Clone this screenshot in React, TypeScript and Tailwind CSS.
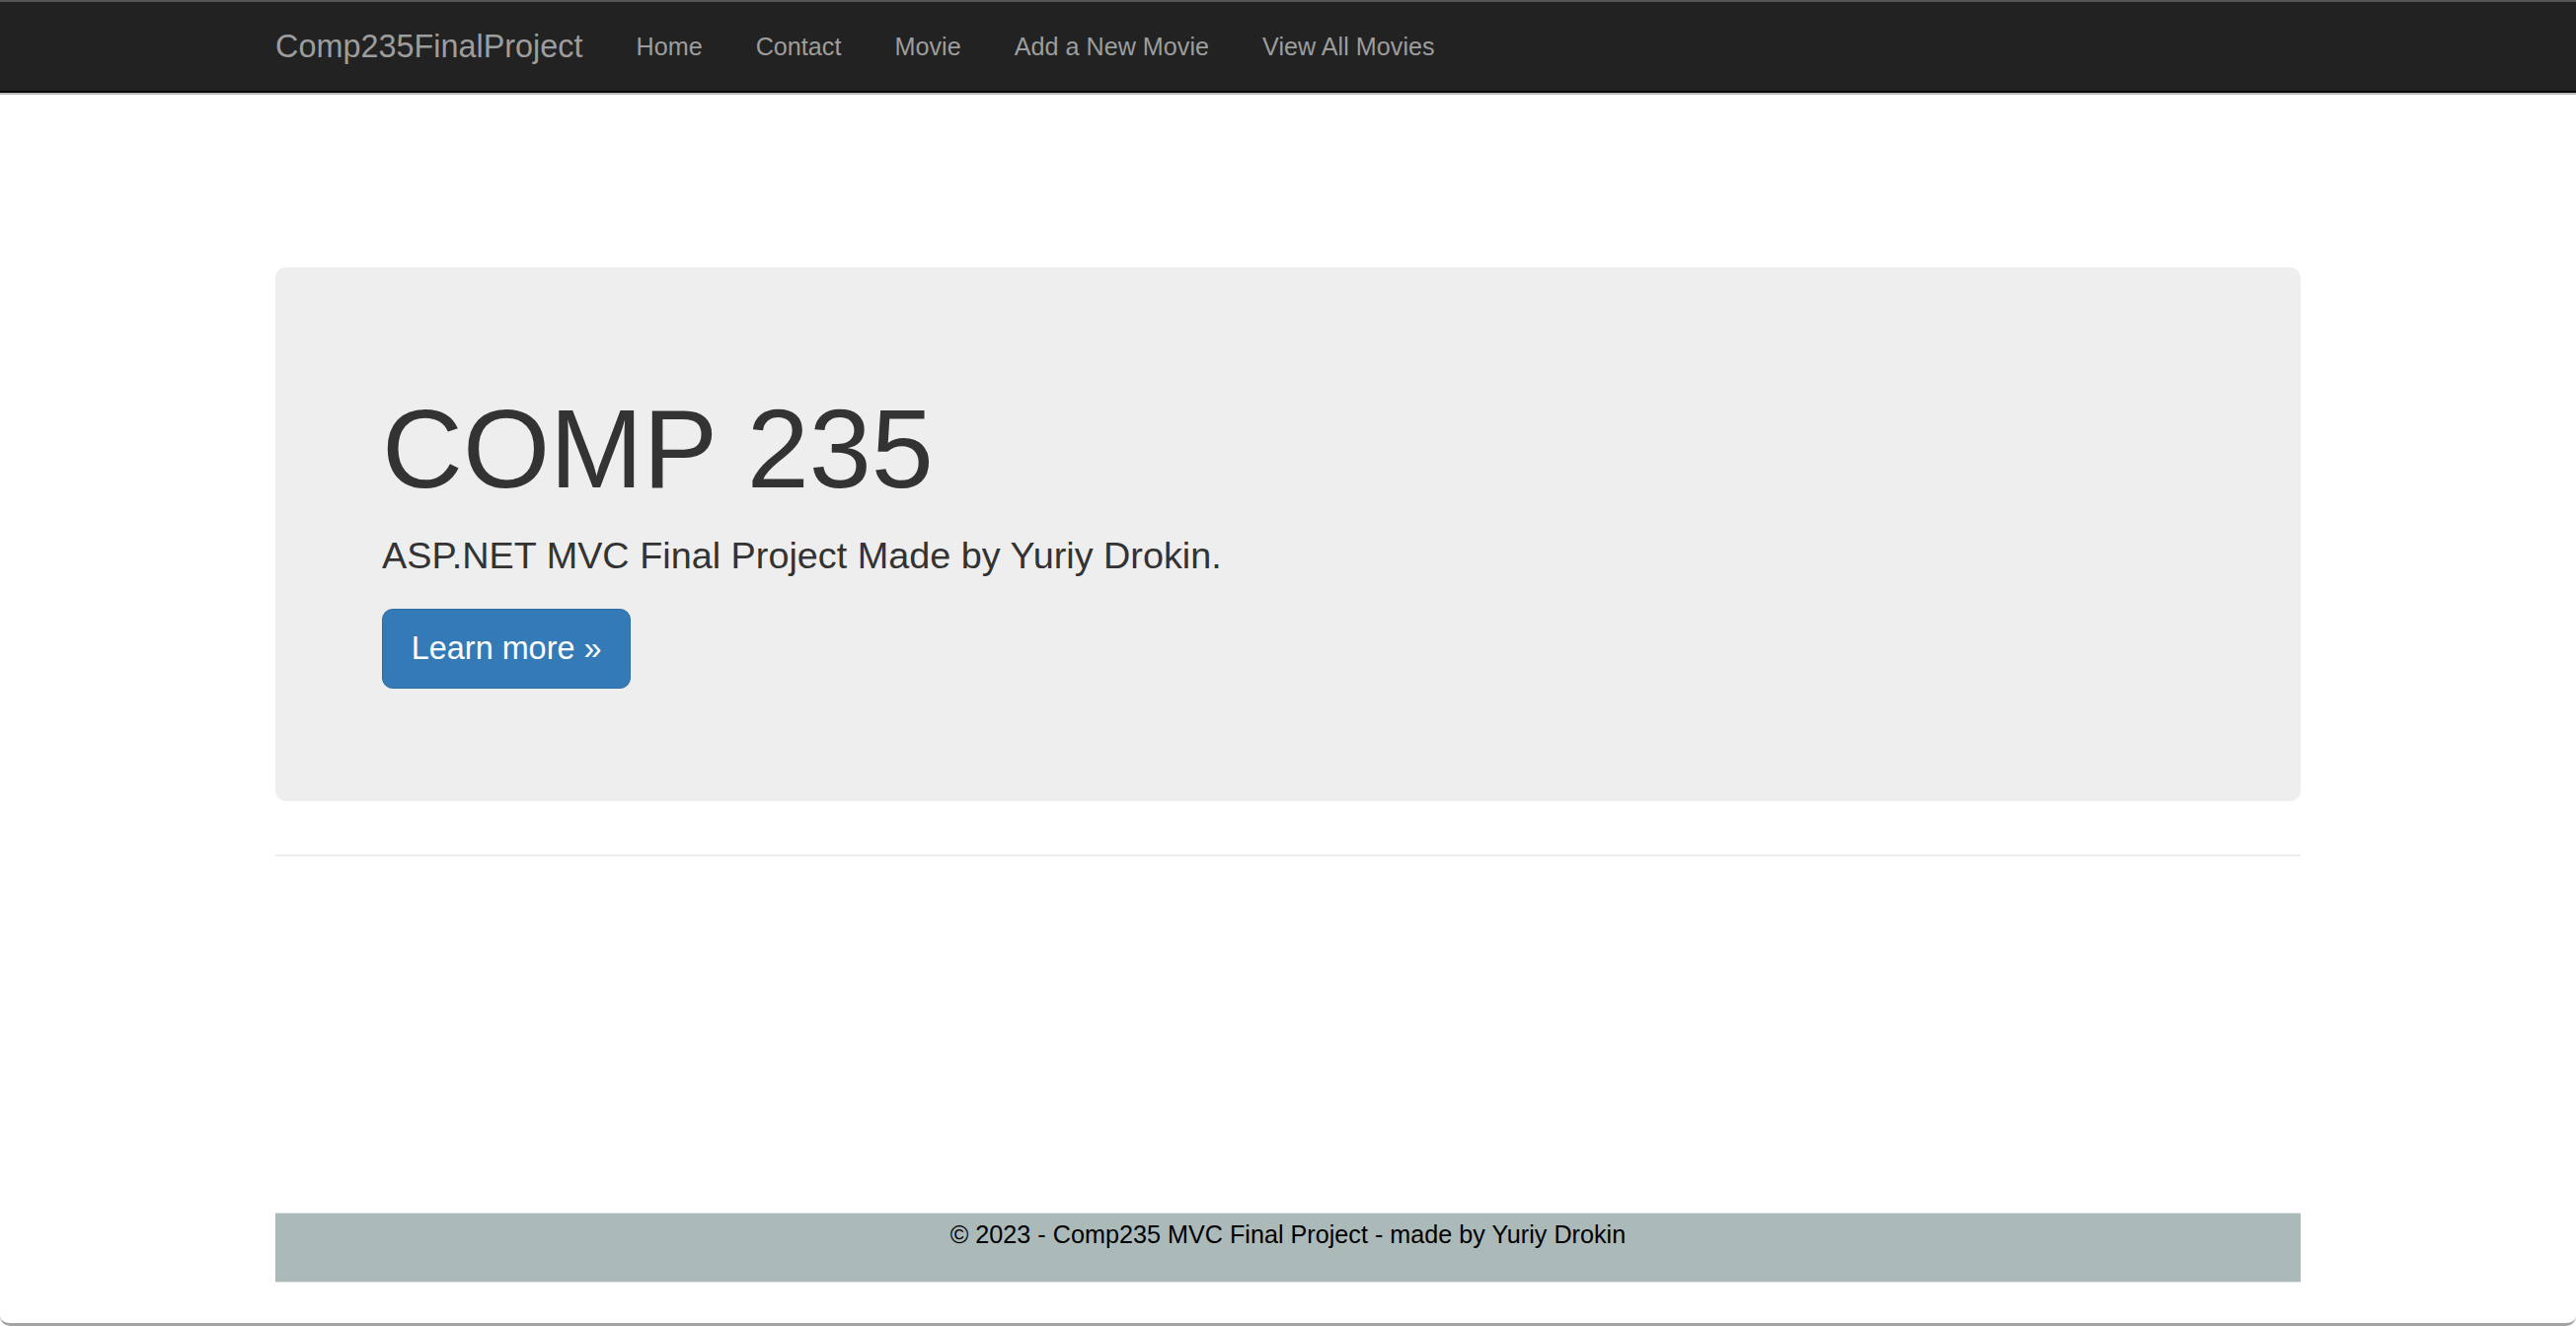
const links = ["Home", "Contact", "Movie", "Add a New Movie", "View All Movies"];

export default function App() {
  return (
    <div className="h-[1344px] w-full overflow-hidden bg-white flex flex-col border-t-2 border-[#555] border-b-[3px] border-b-[#a3a3a3] rounded-b-[10px] font-['Liberation_Sans',Arial,sans-serif]">
      {/* Navbar */}
      <nav className="h-[92px] bg-[#222] border-b-2 border-[#080808] shadow-[0_2px_0_#b8b8b8] shrink-0">
        <div className="w-[2106px] mx-auto px-[27px] h-[90px] flex items-center">
          <a className="text-[32.4px] leading-[36px] text-[#9d9d9d] pr-[27px]">Comp235FinalProject</a>
          <ul className="flex items-center">
            {links.map((l) => (
              <li key={l}>
                <a className="block px-[27px] text-[25.2px] leading-[36px] text-[#9d9d9d]">{l}</a>
              </li>
            ))}
          </ul>
        </div>
      </nav>

      {/* Body */}
      <div className="w-[2106px] mx-auto px-[27px] pt-[177px] flex-1 flex flex-col">
        <div className="bg-[#eee] rounded-[10.8px] px-[108px] py-[86.4px] text-[#333]">
          <h1 className="mt-[36px] mb-[18px] text-[113.4px] leading-[1.1]">COMP 235</h1>
          <p className="text-[37.8px] leading-[54px] mb-[27px]">ASP.NET MVC Final Project Made by Yuriy Drokin.</p>
          <div className="flex mb-[27px]">
            <a className="bg-[#337ab7] border-[1.8px] border-[#2e6da4] text-white text-[32.4px] leading-[43.2px] px-[28.8px] py-[18px] rounded-[10.8px]">
              Learn more »
            </a>
          </div>
        </div>

        <hr className="mt-[54px] border-0 border-t-[2px] border-[#eee]" />

        <footer className="mt-[361px] h-[71px] bg-[#abb9b9] border-y border-[#dfe5e5] text-center">
          <p className="pt-[3px] text-[25.2px] leading-[36px] text-black">© 2023 - Comp235 MVC Final Project - made by Yuriy Drokin</p>
        </footer>
      </div>
    </div>
  );
}
